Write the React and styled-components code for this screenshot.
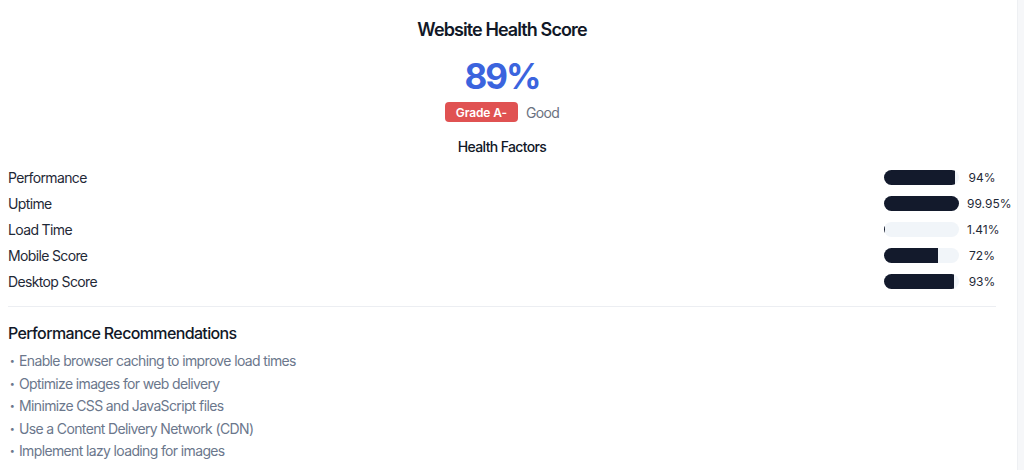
import styled, { createGlobalStyle } from 'styled-components'

const GlobalStyle = createGlobalStyle`
  html, body {
    margin: 0;
    padding: 0;
    background: #ffffff;
  }

  body {
    font-family: Inter, "Noto Sans", "Liberation Sans", sans-serif;
    letter-spacing: -0.04em;
    color: #111827;
    -webkit-font-smoothing: antialiased;
  }
`

const factors = [
  { label: 'Performance', value: 94, text: '94%' },
  { label: 'Uptime', value: 99.95, text: '99.95%' },
  { label: 'Load Time', value: 1.41, text: '1.41%' },
  { label: 'Mobile Score', value: 72, text: '72%' },
  { label: 'Desktop Score', value: 93, text: '93%' },
]

const recommendations = [
  'Enable browser caching to improve load times',
  'Optimize images for web delivery',
  'Minimize CSS and JavaScript files',
  'Use a Content Delivery Network (CDN)',
  'Implement lazy loading for images',
]

const App = () => {
  return (
    <>
      <GlobalStyle />
      <Page>
        <Main>
          <Header>
            <Title>Website Health Score</Title>
            <Score>89%</Score>
            <GradeRow>
              <Badge>Grade A-</Badge>
              <GradeLabel>Good</GradeLabel>
            </GradeRow>
            <SubTitle>Health Factors</SubTitle>
          </Header>

          <FactorList>
            {factors.map((factor) => (
              <FactorRow key={factor.label}>
                <FactorLabel>{factor.label}</FactorLabel>
                <FactorMeter>
                  <Track>
                    <Fill style={{ width: `${factor.value}%` }} />
                  </Track>
                  <FactorValue>{factor.text}</FactorValue>
                </FactorMeter>
              </FactorRow>
            ))}
          </FactorList>

          <Divider />

          <SectionTitle>Performance Recommendations</SectionTitle>
          <RecList>
            {recommendations.map((item) => (
              <RecItem key={item}>
                <Bullet>•</Bullet>
                {item}
              </RecItem>
            ))}
          </RecList>
        </Main>
        <Gutter />
      </Page>
    </>
  )
}

const Page = styled.div`
  display: flex;
  width: 1024px;
  height: 470px;
  overflow: hidden;
`

const Main = styled.div`
  flex: 1;
  padding: 16px 21px 0 8px;
`

const Gutter = styled.div`
  width: 6px;
  background: #f6f7f9;
  border-left: 1px solid #eef0f3;
`

const Header = styled.div`
  display: flex;
  flex-direction: column;
  align-items: center;
`

const Title = styled.h2`
  margin: 0;
  font-size: 18px;
  line-height: 28px;
  font-weight: 600;
  letter-spacing: -0.05em;
  color: #111827;
`

const Score = styled.div`
  margin-top: 12px;
  font-size: 35px;
  line-height: 40px;
  font-weight: 700;
  letter-spacing: -0.06em;
  color: #3b64de;
`

const GradeRow = styled.div`
  display: flex;
  align-items: center;
  gap: 8px;
  margin-top: 6px;
`

const Badge = styled.span`
  display: inline-flex;
  align-items: center;
  height: 20px;
  padding: 0 11px;
  border-radius: 4px;
  background: #e05252;
  color: #ffffff;
  font-size: 12px;
  font-weight: 600;
  letter-spacing: -0.01em;
`

const GradeLabel = styled.span`
  font-size: 14px;
  color: #6b7280;
`

const SubTitle = styled.h3`
  margin: 15px 0 0;
  font-size: 14px;
  line-height: 20px;
  font-weight: 500;
  color: #111827;
`

const FactorList = styled.div`
  display: flex;
  flex-direction: column;
  gap: 6px;
  margin-top: 10px;
`

const FactorRow = styled.div`
  display: flex;
  align-items: center;
  justify-content: space-between;
  height: 20px;
`

const FactorLabel = styled.span`
  font-size: 14px;
  color: #1f2937;
`

const FactorMeter = styled.div`
  display: flex;
  align-items: center;
  gap: 8px;
  width: 112px;
`

const Track = styled.div`
  flex-shrink: 0;
  width: 75px;
  height: 15px;
  border-radius: 999px;
  background: #f1f5f9;
  overflow: hidden;
`

const Fill = styled.div`
  height: 100%;
  background: #131a2c;
`

const FactorValue = styled.span`
  flex-shrink: 0;
  min-width: 30px;
  text-align: center;
  font-size: 12px;
  letter-spacing: 0;
  color: #1f2937;
`

const Divider = styled.hr`
  margin: 15px 0 0;
  border: none;
  border-top: 1px solid #eceef2;
`

const SectionTitle = styled.h3`
  margin: 14px 0 0;
  font-size: 16px;
  line-height: 24px;
  font-weight: 500;
  color: #111827;
`

const RecList = styled.ul`
  list-style: none;
  margin: 5px 0 0;
  padding: 0;
`

const RecItem = styled.li`
  display: flex;
  align-items: center;
  font-size: 14px;
  line-height: 22.5px;
  color: #6b778c;
`

const Bullet = styled.span`
  width: 8px;
  margin-right: 3px;
  font-size: 9px;
  text-align: center;
`

export default App
